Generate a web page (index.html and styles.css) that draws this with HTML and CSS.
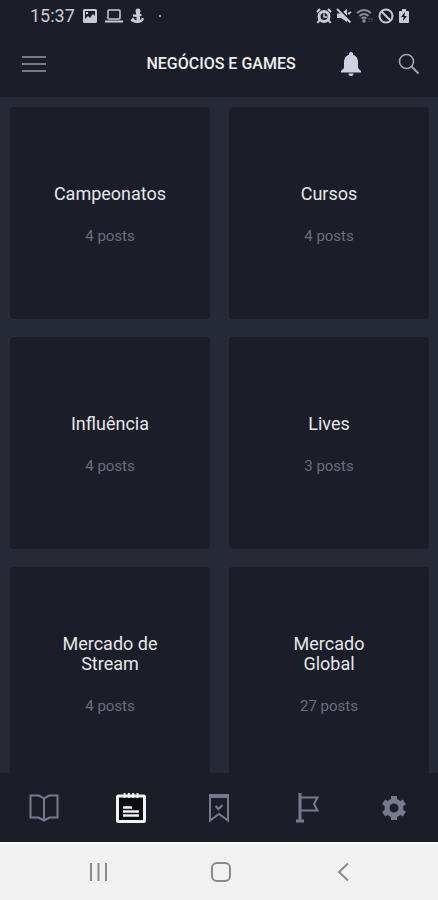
FILE: index.html
```html
<!DOCTYPE html>
<html lang="pt-BR">
<head>
<meta charset="utf-8">
<meta name="viewport" content="width=device-width, initial-scale=1">
<title>Negócios e Games</title>
<link rel="stylesheet" href="styles.css">
</head>
<body>
<div class="app">
  <div class="status">
    <div class="status-group">
      <span class="clock">15:37</span>
      <svg width="16" height="16" viewBox="0 0 16 16"><path fill="currentColor" fill-rule="evenodd" d="M2.500 1h11a1.500 1.500 0 0 1 1.500 1.500v11a1.500 1.500 0 0 1-1.500 1.500h-11A1.500 1.500 0 0 1 1 13.500v-11A1.500 1.500 0 0 1 2.500 1zM3 3v8l3-3 2 2 3-4 2 2V3zM4 4h2v2H4z"/></svg>
      <svg width="18" height="16" viewBox="0 0 18 16" fill="none" stroke="currentColor" stroke-width="1.500"><rect x="3" y="2" width="12" height="9" rx="1"/><path d="M0 13.500h18" stroke-width="2"/></svg>
      <svg width="14" height="16" viewBox="0 0 14 16" fill="currentColor"><circle cx="8" cy="3" r="2.500"/><path d="M6 4h4v2h1.500v2H10v4l1.500-1-.5-1.500 3 1c-.5 3-3.500 4.500-6.500 4.500-3.500 0-6.500-1.500-7-3l2.500-2.500L5 12l1.500.5V9L3 8.500V6.500h3z"/></svg>
      <span class="dot"></span>
    </div>
    <div class="status-group status-right">
      <svg width="16" height="16" viewBox="0 0 16 16"><path d="M1 4l3-3M15 4l-3-3M3.500 12L1.500 15M12.500 12l2 3" fill="none" stroke="currentColor" stroke-width="2.200"/><circle cx="8" cy="8.500" r="5" fill="none" stroke="currentColor" stroke-width="3"/><path d="M8 5.500v3.500h3" fill="none" stroke="currentColor" stroke-width="1.500"/></svg>
      <svg width="16" height="16" viewBox="0 0 16 16"><path fill="currentColor" d="M1 5.500h4L11 1v13l-6-4H1z"/><path d="M2 0l14 14" stroke="#1b1d29" stroke-width="2"/><path d="M1 1l13.500 13.500M12 6l3-2" stroke="currentColor" stroke-width="1.800"/></svg>
      <svg class="dim" width="18" height="16" viewBox="0 0 18 16" fill="none" stroke="currentColor" stroke-width="1.800"><path d="M1 5q7-6 14 0M3.500 8q4.500-4 9 0M5.500 10.500q2.500-2 5 0"/><circle cx="8" cy="13" r=".8"/><path d="M13 10v4M16 10v4" stroke-dasharray="2 1" stroke-width="1" opacity=".6"/></svg>
      <svg width="16" height="16" viewBox="0 0 16 16" fill="none" stroke="currentColor" stroke-width="2"><circle cx="8" cy="8" r="6.500"/><path d="M3.500 3.500l9 9"/></svg>
      <svg width="12" height="16" viewBox="0 0 12 16"><path fill="currentColor" fill-rule="evenodd" d="M4 1h4v2h2q1 0 1 1v10q0 1-1 1H2q-1 0-1-1V4q0-1 1-1h2zM7 4L3 9h2.500L5 13l4-5H6.500z"/></svg>
    </div>
  </div>

  <header class="header">
    <button class="icon-button" type="button" aria-label="Menu">
      <svg width="24" height="24" viewBox="0 0 24 24" fill="none" stroke="#777a8a" stroke-width="2"><path d="M0 5h24M0 12h24M0 19h24"/></svg>
    </button>
    <h1 class="title">NEGÓCIOS E GAMES</h1>
    <div class="actions">
      <button class="icon-button" type="button" aria-label="Notificações">
        <svg width="22" height="26" viewBox="0 0 22 26" fill="#d0d1e2"><path d="M11 1c1.200 0 2 .8 2 2v.8c3.200.9 5 3.700 5 7V17l3 3v1.500H1V20l3-3v-6.200c0-3.300 1.800-6.100 5-7V3c0-1.200.8-2 2-2zM8.500 22.500h5a2.500 2.500 0 0 1-5 0z"/></svg>
      </button>
      <button class="icon-button" type="button" aria-label="Buscar">
        <svg width="22" height="22" viewBox="0 0 22 22" fill="none" stroke="#a3a5b5"><circle cx="8.500" cy="8.500" r="7" stroke-width="1.600"/><path d="M13.500 13.500l7 7" stroke-width="2"/></svg>
      </button>
    </div>
  </header>

  <main class="grid">
    <a class="card" href="#campeonatos"><h2>Campeonatos</h2><p>4 posts</p></a>
    <a class="card" href="#cursos"><h2>Cursos</h2><p>4 posts</p></a>
    <a class="card" href="#influencia"><h2>Influência</h2><p>4 posts</p></a>
    <a class="card" href="#lives"><h2>Lives</h2><p>3 posts</p></a>
    <a class="card" href="#mercado-de-stream"><h2>Mercado de Stream</h2><p>4 posts</p></a>
    <a class="card" href="#mercado-global"><h2>Mercado Global</h2><p>27 posts</p></a>
  </main>

  <nav class="tabs" aria-label="Principal">
    <a href="#inicio" aria-label="Início">
      <svg width="30" height="30" viewBox="0 0 30 30" fill="none" stroke="currentColor" stroke-width="2"><path d="M15 5.500L10 2.500H1.500V24.500H9.500L15 27.500L20.500 24.500H28.500V2.500H20zM15 5.500V27"/></svg>
    </a>
    <a class="active" href="#categorias" aria-label="Categorias" aria-current="page">
      <svg width="30" height="30" viewBox="0 0 30 30"><rect x="1.500" y="3" width="27" height="25.500" rx="1" fill="#0c0d12" stroke="currentColor" stroke-width="3"/><path d="M8.500 0v5M12.800 0v5M17.200 0v5M21.500 0v5" stroke="currentColor" stroke-width="2"/><path d="M7 14.500h9M7 18.500h16M7 22.500h16" stroke="currentColor" stroke-width="2.500"/></svg>
    </a>
    <a href="#salvos" aria-label="Salvos">
      <svg width="30" height="30" viewBox="0 0 30 30" fill="none" stroke="currentColor" stroke-width="2"><path d="M6 2v25.500l9-6.500 9 6.500V2z"/><path d="M5 3h20" stroke-width="4"/><path d="M11.500 13l3 3 4-4"/></svg>
    </a>
    <a href="#bandeira" aria-label="Destaques">
      <svg width="30" height="30" viewBox="0 0 30 30" fill="none" stroke="currentColor" stroke-width="2"><path d="M8 0v28" stroke-width="3"/><path d="M4 28h8" stroke-width="3"/><path d="M8 4.500h17.500L22 11l3.500 6.500H8"/></svg>
    </a>
    <a href="#ajustes" aria-label="Ajustes">
      <svg width="30" height="30" viewBox="-15 -15 30 30" fill="none" stroke="currentColor"><circle r="7" stroke-width="5"/><path d="M0-8.500V-12M0 8.500V12M7.400-4.200L10.400-6M-7.400-4.200L-10.400-6M7.400 4.200L10.400 6M-7.400 4.200L-10.400 6" stroke-width="6"/></svg>
    </a>
  </nav>

  <div class="system">
    <button type="button" aria-label="Recentes"><svg width="22" height="22" viewBox="0 0 22 22" fill="none" stroke="currentColor" stroke-width="2"><path d="M3 2v18M10.500 2v18M18 2v18"/></svg></button>
    <button type="button" aria-label="Tela inicial"><svg width="22" height="22" viewBox="0 0 22 22" fill="none" stroke="currentColor" stroke-width="2"><rect x="2" y="2" width="18" height="18" rx="5"/></svg></button>
    <button type="button" aria-label="Voltar"><svg width="22" height="22" viewBox="0 0 22 22" fill="none" stroke="currentColor" stroke-width="2"><path d="M16 2.500L7 11l9 8.500"/></svg></button>
  </div>
</div>
</body>
</html>
```
FILE: styles.css
```css
* {
  box-sizing: border-box;
}

body {
  margin: 0;
  background: #262a36;
  font-family: Roboto, "Liberation Sans", sans-serif;
}

svg {
  display: block;
  flex: none;
}

button {
  border: 0;
  padding: 0;
  background: none;
  color: inherit;
}

.app {
  display: flex;
  flex-direction: column;
  height: 100vh;
}

.status {
  display: flex;
  justify-content: space-between;
  align-items: center;
  height: 31px;
  padding: 0 28px 0 30px;
  background: #1b1d29;
  color: #c9cad3;
}

.status-group {
  display: flex;
  align-items: center;
  gap: 7px;
}

.status-right {
  gap: 4px;
}

.clock {
  font-size: 18px;
  line-height: 20px;
}

.dim {
  opacity: 0.65;
}

.dot {
  width: 2px;
  height: 2px;
  margin-left: 8px;
  border-radius: 50%;
  background: currentColor;
}

.header {
  display: grid;
  grid-template-columns: 1fr auto 1fr;
  align-items: center;
  height: 66px;
  padding: 0 18px 0 22px;
  background: #1b1d29;
}

.title {
  margin: 0;
  color: #f1f1f4;
  font-size: 16px;
  font-weight: 500;
  line-height: 20px;
}

.actions {
  display: flex;
  justify-content: flex-end;
  align-items: center;
  gap: 36px;
}

.grid {
  flex: 1;
  min-height: 0;
  overflow: hidden;
  display: grid;
  grid-template-columns: 1fr 1fr;
  grid-auto-rows: 212px;
  gap: 18px 19px;
  padding: 10px 9px 0 10px;
}

.card {
  display: flex;
  flex-direction: column;
  justify-content: center;
  align-items: center;
  gap: 22px;
  padding: 3px 40px 0;
  border-radius: 4px;
  background: #1b1d29;
  text-align: center;
  text-decoration: none;
}

.card h2 {
  margin: 0;
  color: #e6e7ea;
  font-size: 18px;
  font-weight: 400;
  line-height: 20px;
}

.card p {
  margin: 0;
  color: #6c6e7d;
  font-size: 15px;
  line-height: 20px;
}

.tabs {
  display: grid;
  grid-template-columns: repeat(5, 1fr);
  place-items: center;
  height: 69px;
  background: #1b1d29;
}

.tabs a {
  color: #777a8f;
}

.tabs .active {
  color: #f4f4f4;
}

.system {
  display: grid;
  grid-template-columns: repeat(3, 1fr);
  place-items: center;
  height: 58px;
  padding: 0 34px 0 38px;
  border-top: 2px solid #ffffff;
  background: #f1f1f1;
  color: #8a8a8a;
}
```
